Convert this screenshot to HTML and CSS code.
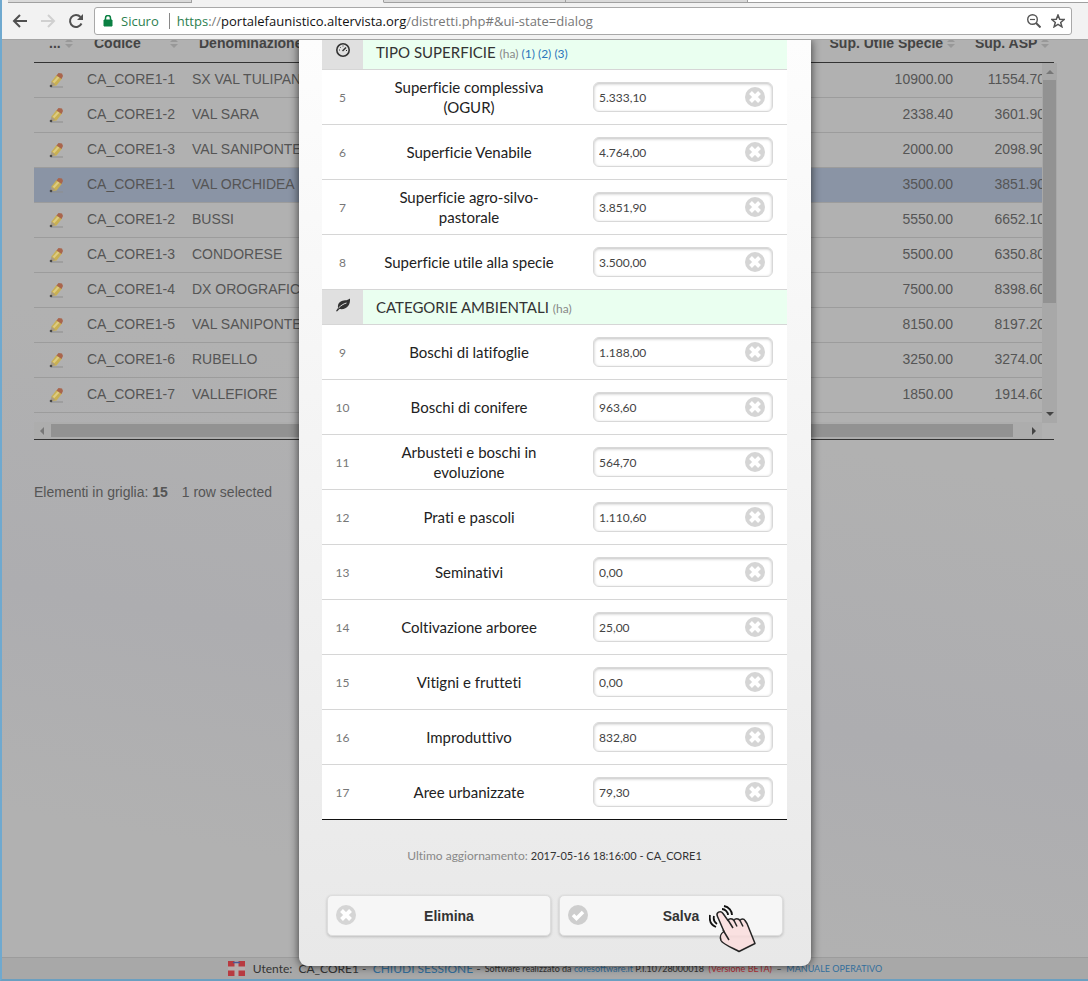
FILE: index.html
```html
<!DOCTYPE html>
<html lang="it">
<head>
    <meta charset="UTF-8">
    <meta name="viewport" content="width=device-width, initial-scale=1.0">
    <title>Distretti</title>
    <link rel="stylesheet" href="styles.css">
</head>
<body>
    <svg class="defs" width="0" height="0">
        <symbol id="pencil" viewBox="0 0 16 16">
            <path d="M2 15h12" stroke="#8d8d8d" stroke-width="1"/>
            <path d="M2.500 9.500 7.500 3l5.500 3.500-5.500 7-4 .5z" fill="#c9b052"/>
            <path d="M4.500 10.500 10 4.500" stroke="#ddcc83" stroke-width="2"/>
            <path d="M7.500 3.500l2-2.500 3.500 .5 1 2.500-1.500 3z" fill="#a9654c"/>
            <path d="M2.500 9.500 1.500 14l5-1z" fill="#a99c85"/>
            <circle cx="2" cy="14" r="1.300" fill="#494949"/>
        </symbol>
        <symbol id="delete" viewBox="0 0 20 20">
            <circle cx="10" cy="10" r="10" fill="#d5d5d5"/>
            <path d="M5.500 5.500l9 9M14.500 5.500l-9 9" stroke="#fff" stroke-width="4"/>
        </symbol>
        <symbol id="check" viewBox="0 0 20 20">
            <circle cx="10" cy="10" r="10" fill="#cecece"/>
            <path d="M5 10l3.500 3.500L15 7" stroke="#fff" stroke-width="3.500" fill="none"/>
        </symbol>
        <symbol id="sort" viewBox="0 0 8 10">
            <path d="M0 4h8L4 0zM0 6h8l-4 4z" fill="#989898"/>
        </symbol>
    </svg>

    <header class="chrome">
        <div class="tabs"><span></span><span></span><span></span><span></span><span></span></div>
        <div class="toolbar">
            <button class="nav" aria-label="Indietro"><svg width="16" height="16" viewBox="0 0 16 16"><path d="M15 8H2M8 2 2 8l6 6" fill="none" stroke="#505050" stroke-width="2"/></svg></button>
            <button class="nav" aria-label="Avanti"><svg width="16" height="16" viewBox="0 0 16 16"><path d="M1 8h13M8 2l6 6-6 6" fill="none" stroke="#d0d0d0" stroke-width="2"/></svg></button>
            <button class="nav" aria-label="Ricarica"><svg width="16" height="16" viewBox="0 0 16 16"><path d="M13.500 10.500A6 6 0 1 1 12.500 4" fill="none" stroke="#505050" stroke-width="2"/><path d="M15 1v6H9z" fill="#505050"/></svg></button>
            <div class="omnibox">
                <svg width="10" height="12" viewBox="0 0 10 12"><path d="M1 5h8v6H1z" fill="#0b8043" stroke="#0b8043"/><path d="M2.500 5V3a2.500 2.500 0 0 1 5 0v2" fill="none" stroke="#0b8043" stroke-width="1.500"/></svg>
                <span class="secure">Sicuro</span>
                <span class="url"><span class="secure-text">https</span>://<b>portalefaunistico.altervista.org</b>/distretti.php#&amp;ui-state=dialog</span>
                <svg width="14" height="14" viewBox="0 0 14 14" fill="none" stroke="#555"><circle cx="5.500" cy="5.500" r="4.800" stroke-width="1.400"/><path d="M3 5.500h5" stroke-width="1.200"/><path d="M9 9l4.500 4.500" stroke-width="2"/></svg>
                <svg width="14" height="14" viewBox="0 0 14 14"><path d="M7 1l1.700 4.200 4.500.3-3.500 2.900 1.200 4.400L7 10.400l-3.900 2.400 1.200-4.400L.8 5.500l4.500-.3z" fill="none" stroke="#555" stroke-width="1.500"/></svg>
            </div>
        </div>
    </header>

    <div class="viewport">
        <main class="page">
            <div class="grid">
                <table class="list">
                    <thead>
                        <tr>
                            <th class="edit">... <svg width="8" height="10"><use href="#sort"/></svg></th>
                            <th class="code"><div>Codice <svg width="8" height="10"><use href="#sort"/></svg></div></th>
                            <th class="name">Denominazione</th>
                            <th class="num use">Sup. Utile Specie <svg width="8" height="10"><use href="#sort"/></svg></th>
                            <th class="num asp">Sup. ASP <svg width="8" height="10"><use href="#sort"/></svg></th>
                        </tr>
                    </thead>
                    <tbody id="rows"></tbody>
                </table>
                <div class="vbar"><i class="up"></i><div class="thumb"></div><i class="down"></i></div>
                <div class="hbar"><i class="left"></i><div class="thumb"></div><i class="right"></i></div>
            </div>
            <p class="info">Elementi in griglia: <b>15</b> <span>1 row selected</span></p>
        </main>

        <footer class="footer">
            <svg width="17" height="15" viewBox="0 0 17 15"><path d="M0 0h17v15H0z" fill="#b83a40"/><path d="M8.500 0v15M0 7.500h17" stroke="#b5adad" stroke-width="4"/><path d="M5 1.500h7" stroke="#4b5794" stroke-width="1.500"/></svg>
            <span class="user">Utente:&nbsp; CA_CORE1 -&nbsp; <a href="#">CHIUDI SESSIONE</a> -</span>
            <span class="credits">Software realizzato da <a href="#">coresoftware.it</a> P.I.10728000018 &nbsp;<em>(Versione BETA)</em>&nbsp; – &nbsp;<a href="#">MANUALE OPERATIVO</a></span>
        </footer>

        <div class="overlay">
            <form class="dialog">
                <table class="fields">
                    <tbody>
                        <tr class="section">
                            <th><svg width="16" height="16" viewBox="0 0 16 16"><circle cx="8" cy="8" r="6.200" fill="none" stroke="#333" stroke-width="1.600"/><path d="M7.500 9 11 5.500" stroke="#333" stroke-width="1.500"/><path d="M4 8h1M5 5l.7.7M8 3.500v1M11 8.500h1" stroke="#333"/></svg></th>
                            <td colspan="2">TIPO SUPERFICIE <small>(ha) <a href="#">(1)</a> <a href="#">(2)</a> <a href="#">(3)</a></small></td>
                        </tr>
                    </tbody>
                    <tbody id="surfaces"></tbody>
                    <tbody>
                        <tr class="section">
                            <th><svg width="16" height="16" viewBox="0 0 16 16"><path d="M15 1.500C15.500 8 12 13 4.500 12L2 14.500l-1-.5 2-3C2 5 7 3.500 10 3.300c2 0 3.500-.6 5-1.800z" fill="#333"/><path d="M3.500 11C6 8.500 8 7 11.500 6" fill="none" stroke="#e0e0e0"/></svg></th>
                            <td colspan="2">CATEGORIE AMBIENTALI <small>(ha)</small></td>
                        </tr>
                    </tbody>
                    <tbody id="categories"></tbody>
                </table>
                <p class="updated">Ultimo aggiornamento: <span>2017-05-16 18:16:00 - CA_CORE1</span></p>
                <div class="actions">
                    <button type="button"><svg width="20" height="20"><use href="#delete"/></svg>Elimina</button>
                    <button type="button" class="save"><svg width="20" height="20"><use href="#check"/></svg>Salva
                        <svg class="hand" width="50" height="48" viewBox="0 0 50 48">
                            <path d="M8.500 11.500c-2-4 3-6.500 5.500-3l5 7c1-2.500 4.500-2.500 6 0 1-2.500 4.500-2.500 6 0 1-2 4-2 5 0l2 3 8 20-16 8c-5-3-16-7-18-11-2-5 0-7 3-9z" fill="#fadddd" fill-opacity=".85" stroke="#252525" stroke-width="1.500" stroke-linejoin="round"/>
                            <path d="M14 25l6 10M19 15l5 8M25 15.500l3 6M31 15.500l3 6" fill="none" stroke="#252525" stroke-width="1.500"/>
                            <path d="M13 4c3 0 6 3 6 6M15 1c5 1 8 5 8 9M5 11c-1 4 0 6 3 8M1 10c-1 6 1 10 6 12" fill="none" stroke="#111" stroke-width="1.800"/>
                        </svg>
                    </button>
                </div>
            </form>
        </div>
    </div>

    <script>
        let rows = [
            ["CA_CORE1-1", "SX VAL TULIPANO", "10900.00", "11554.70"],
            ["CA_CORE1-2", "VAL SARA", "2338.40", "3601.90"],
            ["CA_CORE1-3", "VAL SANIPONTE", "2000.00", "2098.90"],
            ["CA_CORE1-1", "VAL ORCHIDEA", "3500.00", "3851.90"],
            ["CA_CORE1-2", "BUSSI", "5550.00", "6652.10"],
            ["CA_CORE1-3", "CONDORESE", "5500.00", "6350.80"],
            ["CA_CORE1-4", "DX OROGRAFICA", "7500.00", "8398.60"],
            ["CA_CORE1-5", "VAL SANIPONTE", "8150.00", "8197.20"],
            ["CA_CORE1-6", "RUBELLO", "3250.00", "3274.00"],
            ["CA_CORE1-7", "VALLEFIORE", "1850.00", "1914.60"]
        ];
        let fields = [
            [5, "Superficie complessiva (OGUR)", "5.333,10"],
            [6, "Superficie Venabile", "4.764,00"],
            [7, "Superficie agro-silvo-pastorale", "3.851,90"],
            [8, "Superficie utile alla specie", "3.500,00"],
            [9, "Boschi di latifoglie", "1.188,00"],
            [10, "Boschi di conifere", "963,60"],
            [11, "Arbusteti e boschi in evoluzione", "564,70"],
            [12, "Prati e pascoli", "1.110,60"],
            [13, "Seminativi", "0,00"],
            [14, "Coltivazione arboree", "25,00"],
            [15, "Vitigni e frutteti", "0,00"],
            [16, "Improduttivo", "832,80"],
            [17, "Aree urbanizzate", "79,30"]
        ];
        let list = "";
        for (let i = 0; i < rows.length; i++) {
            list += `<tr class="${i == 3 ? "selected" : ""}">
                <td class="edit"><svg width="16" height="16"><use href="#pencil"/></svg></td>
                <td>${rows[i][0]}</td><td>${rows[i][1]}</td>
                <td class="num use">${rows[i][2]}</td><td class="num">${rows[i][3]}</td></tr>`;
        }
        document.getElementById("rows").innerHTML = list;

        function fieldRow(f) {
            return `<tr>
                <th>${f[0]}</th>
                <td class="label"><label for="f${f[0]}">${f[1]}</label></td>
                <td class="value"><div class="box"><input type="text" id="f${f[0]}" value="${f[2]}">
                <button type="button" class="clear" aria-label="Cancella"><svg width="20" height="20"><use href="#delete"/></svg></button></div></td></tr>`;
        }
        document.getElementById("surfaces").innerHTML = fields.slice(0, 4).map(fieldRow).join("");
        document.getElementById("categories").innerHTML = fields.slice(4).map(fieldRow).join("");

        document.querySelectorAll(".clear").forEach(button => {
            button.addEventListener('click', () => {
                button.parentNode.querySelector("input").value = "";
            });
        });
    </script>
</body>
</html>
```
FILE: styles.css
```css
* {
    box-sizing: border-box;
}
body {
    margin: 0;
    min-height: 100vh;
    display: flex;
    flex-direction: column;
    border-left: 2px solid #6fa9cf;
    border-bottom: 2px solid #6b9fc0;
    background: #b1b1b1;
    font-family: "Liberation Sans", Arial, sans-serif;
    font-size: 14px;
    color: #555;
}
a {
    color: #336f9c;
    text-decoration: none;
}
button {
    font: inherit;
    cursor: pointer;
}
.defs {
    position: absolute;
}

/* browser bar */
.chrome {
    height: 40px;
    background: #f2f2f2;
    border-bottom: 1px solid #a5a5a5;
}
.tabs {
    display: flex;
    height: 3px;
    padding-left: 6px;
}
.tabs span {
    width: 182px;
    background: #dadada;
    border-bottom: 1px solid #a0a0a0;
    border-right: 1px solid #a0a0a0;
}
.tabs span:nth-child(1) {
    width: 184px;
}
.tabs span:nth-child(2) {
    width: 192px;
    background: #f2f2f2;
    border-bottom-color: #f2f2f2;
}
.tabs span:last-child {
    flex: 1;
    background: #fff;
    border-right: 0;
}
.toolbar {
    display: flex;
    align-items: center;
    gap: 12px;
    padding: 4px 16px 4px 10px;
}
.nav {
    display: flex;
    padding: 0;
    border: 0;
    background: none;
}
.omnibox {
    flex: 1;
    display: flex;
    align-items: center;
    gap: 10px;
    height: 28px;
    margin-left: -2px;
    padding: 0 6px 0 8px;
    background: #fff;
    border: 1px solid #a9a9a9;
    border-radius: 3px;
    font-family: "Open Sans", sans-serif;
    font-size: 13px;
}
.secure {
    padding-right: 10px;
    border-right: 1px solid #888;
    line-height: 16px;
    margin-left: -2px;
}
.secure,
.secure-text {
    color: #2c7f50;
}
.url {
    flex: 1;
    margin-left: -3px;
    color: #777;
}
.url b {
    font-weight: normal;
    color: #111;
}

/* page behind the dialog */
.viewport {
    position: relative;
    flex: 1;
    display: flex;
    flex-direction: column;
    overflow: hidden;
    background: linear-gradient(190deg, #b1b1b1 40%, #adadb0 65%, #b1b1b1 85%);
}
.page {
    flex: 1;
    padding: 0 34px 0 32px;
}
.grid {
    position: relative;
    margin-top: -15px;
    padding-bottom: 26px;
    border-bottom: 1px solid #333;
}
.list {
    width: 100%;
    table-layout: fixed;
    border-collapse: separate;
    border-spacing: 0;
}
.list th {
    height: 38px;
    padding: 0 0 2px;
    text-align: left;
    color: #444;
    border-bottom: 1px solid #333;
}
.list td {
    height: 35px;
    padding: 0 0 2px;
    border-bottom: 1px solid #9c9c9c;
}
.list .edit {
    width: 53px;
    padding-left: 15px;
}
.list td.edit {
    padding-bottom: 0;
}
.list td svg {
    display: block;
}
.code {
    width: 105px;
}
.code div {
    display: flex;
    justify-content: space-between;
    align-items: center;
    padding: 0 14px 0 7px;
}
.list .name {
    padding-left: 7px;
}
.list .num {
    text-align: right;
    width: 180px;
}
.list .asp {
    width: 92px;
    padding-right: 5px;
}
.list td.num:last-child {
    padding-right: 9px;
}
.list .use {
    padding-right: 7px;
}
.list td.use {
    padding-right: 9px;
}
.selected td {
    background: #8a94a5;
}
.vbar,
.hbar {
    position: absolute;
    display: flex;
    background: #a8a8a8;
}
.vbar {
    top: 38px;
    right: -3px;
    bottom: 16px;
    width: 15px;
    flex-direction: column;
    align-items: center;
    padding: 7px 0;
    gap: 6px;
}
.vbar .thumb {
    width: 13px;
    height: 223px;
    background: #929292;
}
.hbar {
    left: 0;
    right: 12px;
    bottom: 0;
    height: 17px;
    align-items: center;
    gap: 7px;
    padding: 0 6px;
    background: #adadad;
}
.hbar .thumb {
    flex: 1;
    height: 13px;
    margin-right: 12px;
    background: #929292;
}
.vbar i,
.hbar i {
    border: 4px solid transparent;
}
.vbar .up {
    margin-top: -4px;
    border-bottom-color: #777;
}
.vbar .down {
    margin-top: auto;
    margin-bottom: -4px;
    border-top-color: #444;
}
.hbar .left {
    margin-left: -4px;
    border-right-color: #777;
}
.hbar .right {
    margin-right: -4px;
    border-left-color: #444;
}
.info {
    margin: 44px 0 0;
}
.info span {
    margin-left: 10px;
}
.footer {
    display: flex;
    justify-content: center;
    align-items: center;
    gap: 8px;
    height: 22px;
    padding-left: 20px;
    background: #a8a8a8;
    border-top: 1px solid #9c9c9c;
    font-family: Lato, sans-serif;
    font-size: 12px;
    color: #333;
}
.credits {
    font-size: 9px;
    margin-left: -4px;
}
.credits em {
    font-style: normal;
    color: #b22f35;
}

/* dialog */
.overlay {
    position: absolute;
    top: 0;
    left: 0;
    right: 0;
    display: flex;
    justify-content: center;
    padding-left: 20px;
}
.dialog {
    width: 512px;
    padding: 0 24px 30px 23px;
    background: linear-gradient(#fdfdfd, #e8e8e8);
    border-radius: 0 0 9px 9px;
    box-shadow: 0 0 10px rgba(0, 0, 0, 0.7);
    font-family: Lato, sans-serif;
    font-variant-ligatures: none;
    color: #333;
}
.fields {
    width: 100%;
    margin-top: -5px;
    table-layout: fixed;
    border-collapse: separate;
    border-spacing: 0;
    background: #fff;
    border-bottom: 1px solid #111;
}
.fields th {
    width: 41px;
    padding: 0;
    font-size: 12px;
    font-weight: normal;
    color: #777;
}
.fields th,
.fields td {
    height: 55px;
    border-bottom: 1px solid #d6d6d6;
}
.fields tbody:last-child tr:last-child > * {
    height: 54px;
    border-bottom: 0;
}
.fields .section th,
.fields .section td {
    height: 35px;
    padding: 0;
}
.fields .section th {
    background: #e0e0e0;
}
.fields .section th svg {
    display: block;
    margin: -4px auto 0;
}
.fields .section td {
    padding-left: 13px;
    background: #eafff0;
    font-size: 15px;
}
.section small {
    font-size: 12px;
    color: #888;
}
.section a {
    color: #2a75bb;
}
.label {
    padding: 0 20px;
    font-size: 15px;
    line-height: 20px;
    text-align: center;
    color: #222;
}
.fields .value {
    padding: 0 14px 0 18px;
}
.box {
    position: relative;
    width: 180px;
}
.box input {
    display: block;
    width: 100%;
    height: 30px;
    padding: 1px 36px 0 5px;
    border: 1px solid #d8d8d8;
    border-radius: 6px;
    box-shadow: inset 0 1px 3px rgba(0, 0, 0, 0.25);
    font: 12px Lato, sans-serif;
    color: #444;
}
.clear {
    position: absolute;
    top: 5px;
    right: 8px;
    display: flex;
    padding: 0;
    border: 0;
    background: none;
}
.updated {
    margin: 28px 0 31px;
    font-size: 12px;
    line-height: 16px;
    text-align: center;
    color: #888;
}
.updated span {
    font-size: 11px;
    color: #333;
}
.actions {
    display: grid;
    grid-template-columns: 1fr 1fr;
    gap: 8px;
    padding: 0 4px 0 5px;
}
.actions button {
    position: relative;
    height: 41px;
    padding: 0 0 0 20px;
    background: #f6f6f6;
    border: 1px solid #ddd;
    border-radius: 5px;
    box-shadow: 0 1px 3px rgba(0, 0, 0, 0.2);
    font: bold 14px "Liberation Sans", Arial, sans-serif;
    color: #333;
}
.actions button > svg:first-child {
    position: absolute;
    left: 8px;
    top: 9px;
}
.actions .hand {
    position: absolute;
    right: 23px;
    top: 9px;
}
```
